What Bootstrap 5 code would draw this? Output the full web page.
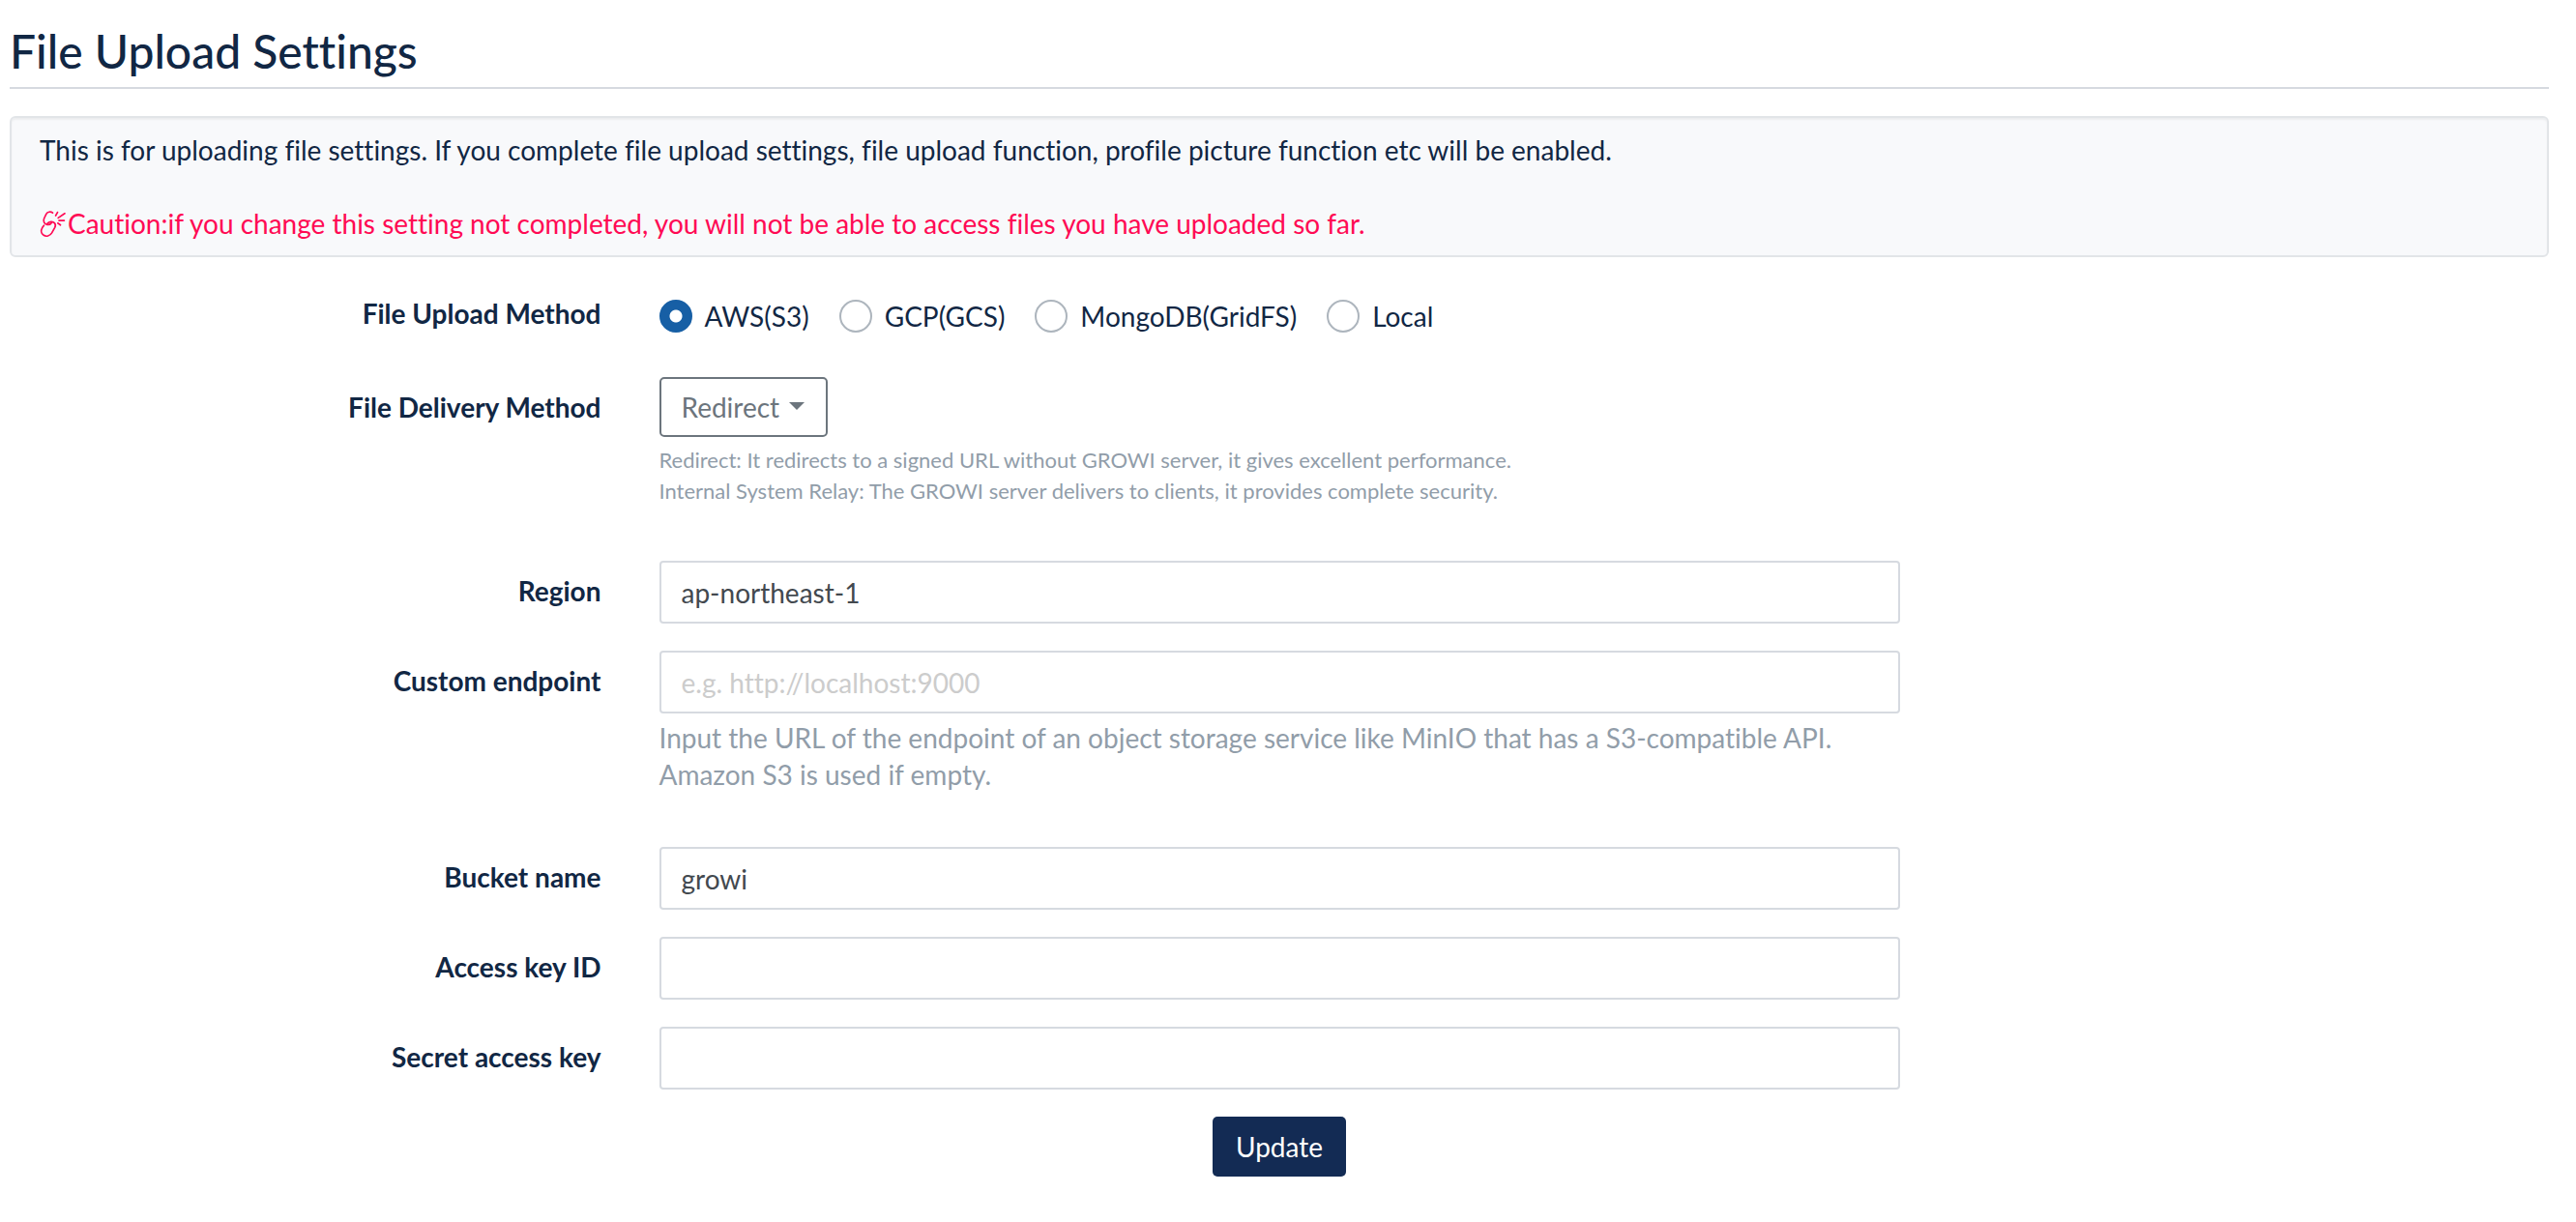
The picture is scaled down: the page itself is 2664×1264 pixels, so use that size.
<!DOCTYPE html>
<html lang="en">
<head>
<meta charset="utf-8">
<meta name="viewport" content="width=device-width, initial-scale=1">
<title>File Upload Settings</title>
<link href="https://cdn.jsdelivr.net/npm/bootstrap@5.3.0/dist/css/bootstrap.min.css" rel="stylesheet">
<style>
  body { font-family: Lato, sans-serif; font-size: 28px; line-height: 38px; color: #112744; background: #fff; font-variant-ligatures: none; }
  .settings-page { padding: 26px 28px 28px 10px; }
  .settings-title { font-size: 48px; line-height: 54px; font-weight: 500; padding-bottom: 10px; margin: 0 0 28px; border-bottom: 2px solid #d6dae0; }
  .well-box { background: #f8f9fb; border: 2px solid #e2e5e8; border-radius: 6px; padding: 14px 29px; margin-bottom: 27px; box-shadow: inset 0 2px 2px rgba(0,0,0,.05); }
  .caution { color: #ff0a54; }
  .caution svg { width: 28px; height: 28px; vertical-align: -4px; margin-right: 1px; }
  .settings-row { --bs-gutter-x: 60px; margin-bottom: 28px; }
  .settings-label { font-weight: 700; text-align: right; padding-top: 12px; }
  .radio-list { padding-top: 15px; padding-bottom: 16px; gap: 31px; }
  .radio-item { display: flex; align-items: center; gap: 13px; min-height: 0; margin: 0; padding: 0; }
  .radio-item .form-check-input { width: 34px; height: 34px; margin: 0; float: none; border: 2px solid #adb5bd; background-color: #fff; flex: none; }
  .radio-item .form-check-input:checked { background-color: #175fa5; border-color: #175fa5; background-image: radial-gradient(circle, #fff 6px, transparent 7px); }
  .delivery-select { width: 174px; height: 62px; padding: 0 21px; border: 2px solid #6c757d; border-radius: 5px; color: #6c757d; font-size: 28px; line-height: 38px;
    background: #fff url("data:image/svg+xml,%3Csvg xmlns='http://www.w3.org/2000/svg' viewBox='0 0 16 8'%3E%3Cpath fill='%236c757d' d='M0 0h16L8 8z'/%3E%3C/svg%3E") no-repeat right 22px top 24px / 16px 8px; }
  .settings-input { height: 65px; padding: 0 21px; font-size: 28px; line-height: 38px; color: #43494f; border: 2px solid #d6dae0; border-radius: 4px; font-variant-ligatures: none; }
  .settings-input::placeholder { color: #ccc; opacity: 1; }
  .help-note { color: #919da9; margin: 6px 0 28px; }
  .help-small { font-size: 22px; line-height: 32px; margin-top: 8px; }
  .btn-update { height: 62px; padding: 0 24px; font-size: 28px; line-height: 38px; color: #fff; background: #132b54; border: 0; border-radius: 5px; }
  .btn-update:hover { color: #fff; background: #0d1f3d; }
</style>
</head>
<body>
<main class="settings-page">
  <h2 class="settings-title">File Upload Settings</h2>
  <p class="well-box">This is for uploading file settings. If you complete file upload settings, file upload function, profile picture function etc will be enabled.<br><br><span class="caution"><svg viewBox="0 0 28 28" fill="none" stroke="currentColor" stroke-width="1.7" stroke-linecap="round" stroke-linejoin="round" aria-hidden="true"><path d="M13.500 2.200C11.400 .5 8.200 .9 6.800 3.400L4.600 8C3.300 11 5 14 7.800 14.400C10 14.700 11.700 13.700 12.700 12"/><path d="M7.800 13.400C9.800 11 13.600 10.600 15.300 12.600C16.500 14 16.600 15.700 15.700 17.400L12.600 22.900C10.700 26.100 6.800 27.200 4.100 25.300C1.400 23.500 1.100 20.300 2.700 17.600L4.400 15.200"/><path d="M16.600 5L18.500 1.600M19.200 7.400L26 2.800M20 10.200L25.400 10.100M18.800 12.800L21.500 14.800"/></svg>Caution:if you change this setting not completed, you will not be able to access files you have uploaded so far.</span></p>

  <form onsubmit="return false">
    <div class="row settings-row" role="radiogroup" aria-labelledby="method-label">
      <div class="col-3 settings-label" id="method-label">File Upload Method</div>
      <div class="col-6 d-flex flex-wrap radio-list">
        <div class="form-check radio-item"><input class="form-check-input" type="radio" name="method" id="m-aws" checked><label for="m-aws">AWS(S3)</label></div>
        <div class="form-check radio-item"><input class="form-check-input" type="radio" name="method" id="m-gcp"><label for="m-gcp">GCP(GCS)</label></div>
        <div class="form-check radio-item"><input class="form-check-input" type="radio" name="method" id="m-grid"><label for="m-grid">MongoDB(GridFS)</label></div>
        <div class="form-check radio-item"><input class="form-check-input" type="radio" name="method" id="m-local"><label for="m-local">Local</label></div>
      </div>
    </div>
    <div class="row settings-row">
      <label class="col-3 settings-label" for="delivery">File Delivery Method</label>
      <div class="col-6">
        <select class="form-select delivery-select" id="delivery"><option>Redirect</option><option>Internal System Relay</option></select>
        <p class="help-note help-small">Redirect: It redirects to a signed URL without GROWI server, it gives excellent performance.<br>Internal System Relay: The GROWI server delivers to clients, it provides complete security.</p>
      </div>
    </div>
    <div class="row settings-row">
      <label class="col-3 settings-label" for="region">Region</label>
      <div class="col-6"><input class="form-control settings-input" id="region" type="text" value="ap-northeast-1"></div>
    </div>
    <div class="row settings-row">
      <label class="col-3 settings-label" for="endpoint">Custom endpoint</label>
      <div class="col-6">
        <input class="form-control settings-input" id="endpoint" type="text" placeholder="e.g. http://localhost:9000">
        <p class="help-note">Input the URL of the endpoint of an object storage service like MinIO that has a S3-compatible API.<br>Amazon S3 is used if empty.</p>
      </div>
    </div>
    <div class="row settings-row">
      <label class="col-3 settings-label" for="bucket">Bucket name</label>
      <div class="col-6"><input class="form-control settings-input" id="bucket" type="text" value="growi"></div>
    </div>
    <div class="row settings-row">
      <label class="col-3 settings-label" for="access">Access key ID</label>
      <div class="col-6"><input class="form-control settings-input" id="access" type="text"></div>
    </div>
    <div class="row settings-row">
      <label class="col-3 settings-label" for="secret">Secret access key</label>
      <div class="col-6"><input class="form-control settings-input" id="secret" type="text"></div>
    </div>
    <div class="d-flex justify-content-center"><button class="btn btn-update" type="submit">Update</button></div>
  </form>
</main>
<script src="https://cdn.jsdelivr.net/npm/bootstrap@5.3.0/dist/js/bootstrap.bundle.min.js"></script>
</body>
</html>
